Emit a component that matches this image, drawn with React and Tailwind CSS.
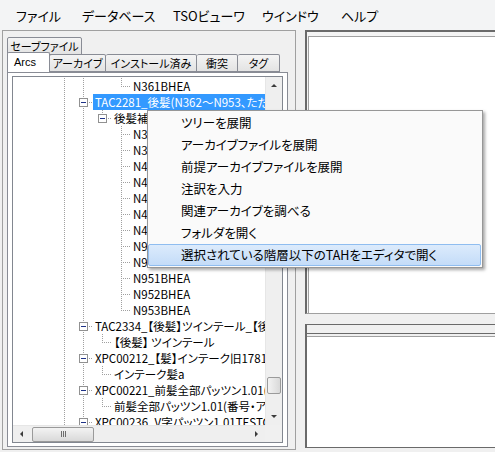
import React from 'react';

const jp = "font-['Meiryo_UI','Noto_Sans_CJK_JP',sans-serif] [font-feature-settings:'palt']";

const menus = [
  { label: 'ファイル', w: 'w-[66px]' },
  { label: 'データベース', w: 'w-[91px]' },
  { label: 'TSOビューワ', w: 'w-[89px]' },
  { label: 'ウインドウ', w: 'w-[79px]' },
  { label: 'ヘルプ', w: 'w-[60px]' },
];

const tabs = [
  { label: 'アーカイブ', w: 'w-[56px]' },
  { label: 'インストール済み', w: 'w-[91px]' },
  { label: '衝突', w: 'w-[41px]' },
  { label: 'タグ', w: 'w-[42px]' },
];

// cells per row: I = vertical pass, T = tee, L = elbow, E suffix = expander box
const rows = [
  { cells: ['I', 'I', '', 'L'], text: 'N361BHEA' },
  { cells: ['I', 'TE'], text: 'TAC2281_後髪(N362～N953、ただし一部除く)', selected: true },
  { cells: ['I', 'I', 'LE'], text: '後髪補完パーツ' },
  { cells: ['I', 'I', '', 'T'], text: 'N362BHEA' },
  { cells: ['I', 'I', '', 'T'], text: 'N363BHEA' },
  { cells: ['I', 'I', '', 'T'], text: 'N401BHEA' },
  { cells: ['I', 'I', '', 'T'], text: 'N402BHEA' },
  { cells: ['I', 'I', '', 'T'], text: 'N403BHEA' },
  { cells: ['I', 'I', '', 'T'], text: 'N404BHEA' },
  { cells: ['I', 'I', '', 'T'], text: 'N405BHEA' },
  { cells: ['I', 'I', '', 'T'], text: 'N901BHEA' },
  { cells: ['I', 'I', '', 'T'], text: 'N902BHEA' },
  { cells: ['I', 'I', '', 'T'], text: 'N951BHEA' },
  { cells: ['I', 'I', '', 'T'], text: 'N952BHEA' },
  { cells: ['I', 'I', '', 'L'], text: 'N953BHEA' },
  { cells: ['I', 'TE'], text: 'TAC2334_【後髪】ツインテール_【後髪】ツインテール' },
  { cells: ['I', 'I', 'L'], text: '【後髪】 ツインテール' },
  { cells: ['I', 'TE'], text: 'XPC00212_【髪】インテーク旧1781(前髪)' },
  { cells: ['I', 'I', 'L'], text: 'インテーク髪a' },
  { cells: ['I', 'TE'], text: 'XPC00221_前髪全部パッツン1.01(番号・アイテム)' },
  { cells: ['I', 'I', 'L'], text: '前髪全部パッツン1.01(番号・アイテム)' },
  { cells: ['I', 'TE'], text: 'XPC00236_V字パッツン1.01TESTC' },
];

const menuItems = [
  'ツリーを展開',
  'アーカイブファイルを展開',
  '前提アーカイブファイルを展開',
  '注訳を入力',
  '関連アーカイブを調べる',
  'フォルダを開く',
  '選択されている階層以下のTAHをエディタで開く',
];

const Cell = ({ type }) => {
  const through = type === 'I' || type === 'T' || type === 'TE';
  const half = type === 'L' || type === 'LE';
  const across = type !== 'I' && type !== '';
  const box = type.endsWith('E');
  return (
    <svg width="19" height="16" className="shrink-0">
      {through && <line x1="9.5" y1="0" x2="9.5" y2="16" stroke="#a0a0a0" strokeDasharray="1 1" />}
      {half && <line x1="9.5" y1="0" x2="9.5" y2="9" stroke="#a0a0a0" strokeDasharray="1 1" />}
      {across && <line x1="11" y1="8.5" x2="19" y2="8.5" stroke="#a0a0a0" strokeDasharray="1 1" />}
      {box && (
        <>
          <rect x="5.5" y="4.5" width="8" height="8" fill="#fff" stroke="#919191" />
          <line x1="7" y1="8.5" x2="12" y2="8.5" stroke="#1e3287" />
        </>
      )}
    </svg>
  );
};

const TreeRow = ({ row }) => (
  <div className="flex h-[16px] items-center whitespace-nowrap">
    <div className="w-[42px] shrink-0" />
    {row.cells.map((c, i) => (
      <Cell key={i} type={c} />
    ))}
    <span
      className={
        row.selected
          ? 'px-[2px] h-[16px] leading-[16px] bg-[#3399ff] text-white'
          : 'px-[2px] h-[16px] leading-[16px] text-black'
      }
    >
      {row.text}
    </span>
  </div>
);

const Arrow = ({ dir }) => {
  const pts = {
    up: '1,4 4,1 7,4',
    down: '1,1 4,4 7,1',
    left: '4,1 1,4 4,7',
    right: '1,1 4,4 1,7',
  };
  const vertical = dir === 'up' || dir === 'down';
  return (
    <svg width={vertical ? 8 : 5} height={vertical ? 5 : 8}>
      <polygon points={pts[dir]} fill="#3c3c3c" />
    </svg>
  );
};

export default function App() {
  return (
    <div className={`relative w-[495px] h-[452px] overflow-hidden bg-[#f0f0f0] text-black ${jp}`}>
      {/* Menu bar */}
      <div className="h-[30px] flex items-center pt-[1px] bg-[#f3f4f5] text-[13px]">
        <span className="w-[7px]" />
        {menus.map((m) => (
          <span key={m.label} className={`${m.w} pl-[9px] shrink-0 whitespace-nowrap`}>
            {m.label}
          </span>
        ))}
      </div>

      <div className="flex">
        {/* Left panel */}
        <div className="ml-[2px] w-[294px] h-[420px] border border-[#a0a0a0] pl-[4px] pt-[6px] shrink-0">
          {/* tab rows */}
          <div className="h-[35px] text-[11px]">
            <div className="flex">
              <div className="w-[75px] h-[18px] border border-[#898c95] rounded-t-[2px] bg-gradient-to-b from-[#f4f4f4] to-[#e3e3e3] text-center leading-[17px] whitespace-nowrap overflow-hidden">
                セーブファイル
              </div>
            </div>
            <div className="flex h-[17px] -mt-[1px]">
              <div className="relative z-10 w-[43px] h-[20px] -mt-[2px] border border-b-0 border-[#898c95] rounded-t-[2px] bg-white pl-[6px] leading-[18px] text-[11px] font-['Liberation_Sans',sans-serif]">
                Arcs
              </div>
              {tabs.map((t) => (
                <div
                  key={t.label}
                  className={`${t.w} h-[18px] border border-l-0 border-[#898c95] rounded-t-[2px] bg-gradient-to-b from-[#f4f4f4] to-[#e3e3e3] text-center leading-[17px] shrink-0 whitespace-nowrap overflow-hidden`}
                >
                  {t.label}
                </div>
              ))}
            </div>
          </div>

          {/* tab page */}
          <div className="w-[281px] h-[375px] border border-[#898c95] bg-white px-[4px] pt-[3px]">
            <div className="w-[271px] h-[367px] border border-[#828790] flex flex-col text-[11.5px]">
              <div className="flex h-[348px]">
                <div className="w-[252px] overflow-hidden pt-[1px]">
                  {rows.map((r, i) => (
                    <TreeRow key={i} row={r} />
                  ))}
                </div>
                {/* vertical scrollbar */}
                <div className="w-[17px] bg-[#efefef] border-l border-[#e6e6e6] flex flex-col">
                  <div className="h-[17px] flex items-center justify-center">
                    <Arrow dir="up" />
                  </div>
                  <div className="flex-1 flex flex-col justify-end pb-[14px] px-[1px]">
                    <div className="h-[17px] rounded-[2px] border border-[#9a9a9a] bg-gradient-to-r from-[#f3f3f3] to-[#d9d9d9]" />
                  </div>
                  <div className="h-[17px] flex items-center justify-center">
                    <Arrow dir="down" />
                  </div>
                </div>
              </div>
              {/* horizontal scrollbar */}
              <div className="flex h-[17px]">
                <div className="w-[252px] bg-[#efefef] border-t border-[#e6e6e6] flex items-center">
                  <div className="w-[17px] flex justify-center">
                    <Arrow dir="left" />
                  </div>
                  <div className="ml-[2px] w-[62px] h-[15px] rounded-[2px] border border-[#9a9a9a] bg-gradient-to-b from-[#f3f3f3] to-[#d9d9d9] flex items-center justify-center gap-[1px]">
                    <span className="w-[1px] h-[6px] bg-[#6d6d6d]" />
                    <span className="w-[1px] h-[6px] bg-[#6d6d6d]" />
                    <span className="w-[1px] h-[6px] bg-[#6d6d6d]" />
                  </div>
                  <div className="flex-1" />
                  <div className="w-[17px] flex justify-center">
                    <Arrow dir="right" />
                  </div>
                </div>
                <div className="w-[17px] bg-[#f0f0f0]" />
              </div>
            </div>
          </div>
        </div>

        {/* Right panels */}
        <div className="ml-[9px] w-[200px] shrink-0 flex flex-col">
          <div className="h-[284px] border-l-2 border-t-2 border-b border-[#6a6a6a] border-b-[#a0a0a0] bg-[#f4f4f4] flex flex-col">
            <div className="flex-1 mt-[4px] ml-[1px] border-l border-t border-[#a0a0a0] bg-white" />
          </div>
          <div className="h-[10px]" />
          <div className="h-[124px] border-l-2 border-t border-b border-[#6a6a6a] flex flex-col">
            <div className="h-[9px] bg-[#f0f0f0] border-b border-[#6a6a6a]" />
            <div className="flex-1 mt-[2px] border-t border-[#a0a0a0] bg-white" />
          </div>
        </div>
      </div>

      {/* Context menu */}
      <div className="absolute left-[147px] top-[110px] w-[336px] border border-[#979797] bg-[#fafafa] py-[1px] text-[12.5px] shadow-[2px_2px_3px_rgba(0,0,0,0.35)]">
        {menuItems.map((item, i) =>
          i === menuItems.length - 1 ? (
            <div
              key={item}
              className="mr-[1px] h-[22px] rounded-[2px] border border-[#8fbdf0] bg-gradient-to-b from-[#dcebfc] to-[#c4dcf8] pl-[32px] leading-[20px] whitespace-nowrap"
            >
              {item}
            </div>
          ) : (
            <div key={item} className="h-[22px] pl-[33px] leading-[22px] whitespace-nowrap">
              {item}
            </div>
          )
        )}
      </div>
    </div>
  );
}
